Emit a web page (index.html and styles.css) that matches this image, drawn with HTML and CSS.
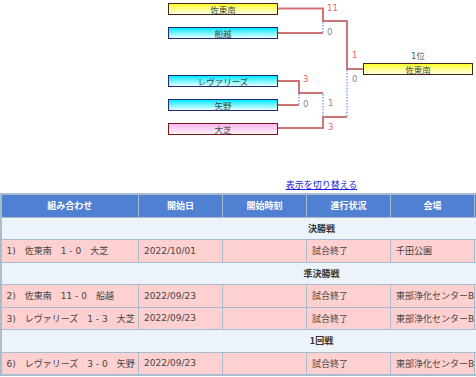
FILE: index.html
```html
<!DOCTYPE html>
<html lang="ja">
<head>
<meta charset="utf-8">
<link rel="stylesheet" href="styles.css">
</head>
<body>
<div class="page">
  <div class="bracket">
    <svg class="lines" width="307" height="140" viewBox="0 0 307 140">
      <g fill="none" stroke="#cf7474" stroke-width="2">
        <path d="M110 8.5 H155 V21 H179 V69 H196"/>
        <path d="M110 33 H155"/>
        <path d="M110 81 H131 V93 H155"/>
        <path d="M110 105 H131"/>
        <path d="M110 128 H155 V117 H179"/>
      </g>
      <g fill="none" stroke="#7aa4ff" stroke-width="1.5" stroke-dasharray="1.5 1.5">
        <path d="M155 22 V33"/>
        <path d="M131 94 V105"/>
        <path d="M155 94 V117"/>
        <path d="M179 70 V117"/>
      </g>
    </svg>
    <div class="team yellow" style="top:3px">佐東南</div>
    <div class="team cyan" style="top:27px">船越</div>
    <div class="team cyan" style="top:75px">レヴァリーズ</div>
    <div class="team cyan" style="top:99px">矢野</div>
    <div class="team pink" style="top:123px">大芝</div>
    <div class="rank" style="top:50px">1位</div>
    <div class="team yellow champ" style="top:63px">佐東南</div>
    <span class="score win" style="left:159px;top:3px">11</span>
    <span class="score" style="left:159px;top:27px">0</span>
    <span class="score win" style="left:184px;top:50px">1</span>
    <span class="score" style="left:184px;top:74px">0</span>
    <span class="score win" style="left:135px;top:74px">3</span>
    <span class="score" style="left:135px;top:99px">0</span>
    <span class="score" style="left:160px;top:98px">1</span>
    <span class="score win" style="left:160px;top:122px">3</span>
  </div>
  <div class="toggle"><a href="#">表示を切り替える</a></div>
  <table class="games">
    <colgroup>
      <col class="c1"><col class="c2"><col class="c2"><col class="c2"><col class="c2"><col class="c2"><col class="c2">
    </colgroup>
    <thead>
      <tr><th>組み合わせ</th><th>開始日</th><th>開始時刻</th><th>進行状況</th><th>会場</th><th></th><th></th></tr>
    </thead>
    <tbody>
      <tr class="sec"><td colspan="7">決勝戦</td></tr>
      <tr class="row"><td>1)　佐東南　1 - 0　大芝</td><td>2022/10/01</td><td></td><td>試合終了</td><td>千田公園</td><td></td><td></td></tr>
      <tr class="sec"><td colspan="7">準決勝戦</td></tr>
      <tr class="row"><td>2)　佐東南　11 - 0　船越</td><td>2022/09/23</td><td></td><td>試合終了</td><td>東部浄化センターB</td><td></td><td></td></tr>
      <tr class="row"><td>3)　レヴァリーズ　1 - 3　大芝</td><td>2022/09/23</td><td></td><td>試合終了</td><td>東部浄化センターB</td><td></td><td></td></tr>
      <tr class="sec"><td colspan="7">1回戦</td></tr>
      <tr class="row"><td>6)　レヴァリーズ　3 - 0　矢野</td><td>2022/09/23</td><td></td><td>試合終了</td><td>東部浄化センターB</td><td></td><td></td></tr>
    </tbody>
  </table>
</div>
</body>
</html>
```

FILE: styles.css
```css
html, body {
  margin: 0;
  padding: 0;
  overflow: hidden;
  background: #fff;
}
body {
  padding-left: 1px;
  font-family: "DejaVu Sans", "Noto Sans CJK JP", sans-serif;
  font-size: 9px;
  color: #444;
}
.page {
  width: 641px;
  display: flex;
  flex-direction: column;
  align-items: center;
}
.bracket {
  position: relative;
  width: 307px;
  height: 178px;
}
.lines {
  position: absolute;
  left: 0;
  top: 0;
}
.team {
  position: absolute;
  left: 0;
  width: 110px;
  height: 12px;
  box-sizing: border-box;
  line-height: 10px;
  text-align: center;
  font-family: "Noto Sans CJK JP", sans-serif;
  font-size: 8.5px;
  color: #3c4a44;
  white-space: nowrap;
}
.yellow {
  border: 1px solid #4a2410;
  background: linear-gradient(#ffff2e, #ffffe8);
}
.cyan {
  border: 1px solid #1c2a80;
  background: linear-gradient(#00eaff, #e8ffff);
}
.pink {
  border: 1px solid #7a1818;
  background: linear-gradient(#f7b6ee, #fff2fc);
}
.champ {
  left: 195px;
}
.rank {
  position: absolute;
  left: 195px;
  width: 110px;
  text-align: center;
  font-size: 8.5px;
  line-height: 12px;
  color: #555;
}
.score {
  position: absolute;
  font-size: 8.5px;
  line-height: 11px;
  color: #7a8a9a;
}
.score.win {
  color: #ff5a5a;
}
.toggle {
  height: 15px;
  line-height: 13px;
  text-align: center;
}
.toggle a {
  color: #2222dd;
  font-family: "Noto Sans CJK JP", sans-serif;
  font-size: 9px;
  text-decoration: underline;
}
.games {
  width: 641px;
  table-layout: fixed;
  border-collapse: collapse;
  border: 2px solid #a9bccd;
}
.c1 { width: 138px; }
.c2 { width: 84px; }
.games th, .games td {
  border: 1px solid #a9bccd;
  height: 21.5px;
  padding: 0 5px;
  white-space: nowrap;
  overflow: hidden;
  font-size: 9px;
}
.games th {
  background: #5080d2;
  color: #fff;
  font-weight: bold;
  text-align: center;
  font-family: "Noto Sans CJK JP", sans-serif;
}
.sec td {
  background: #edf3fb;
  text-align: center;
  font-weight: bold;
  color: #333;
  font-family: "Noto Sans CJK JP", sans-serif;
}
.row td {
  background: #ffd0d0;
  color: #444;
}
```
